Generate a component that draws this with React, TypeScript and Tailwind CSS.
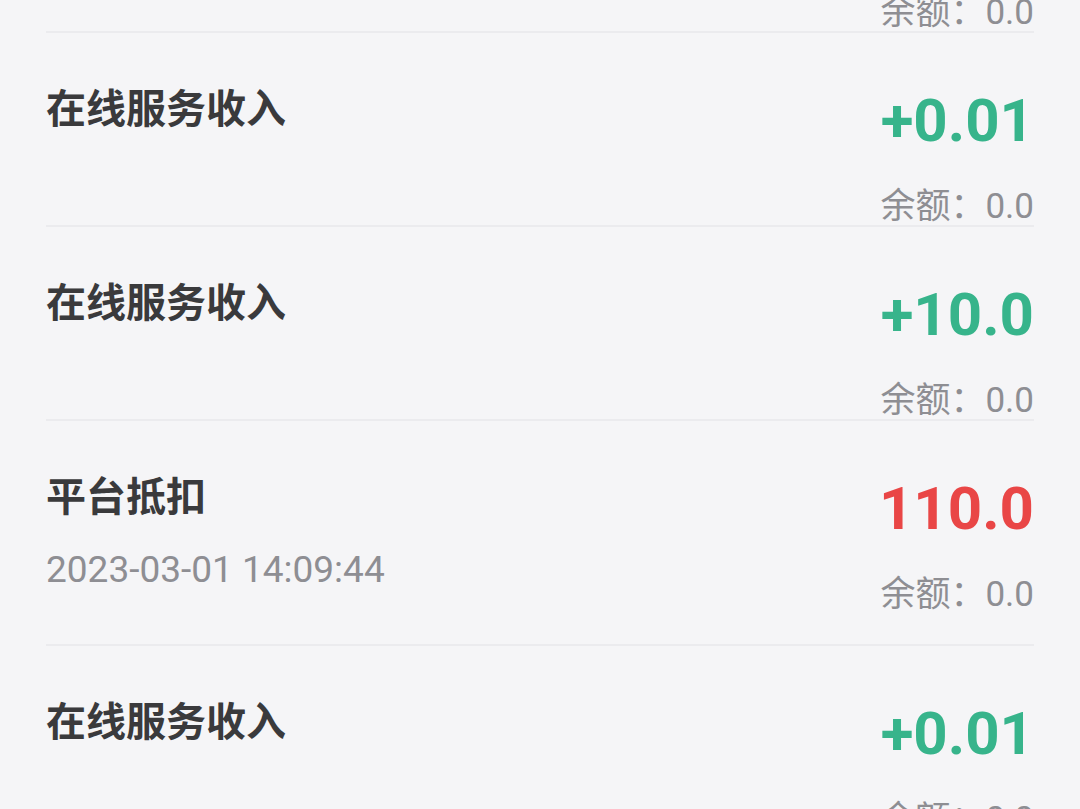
import React from "react";

type Row = { title: string; amount: string; kind: "in" | "out"; date?: string; balance: string };

const rows: Row[] = [
  { title: "在线服务收入", amount: "+0.01", kind: "in", balance: "0.0" },
  { title: "在线服务收入", amount: "+0.01", kind: "in", balance: "0.0" },
  { title: "在线服务收入", amount: "+10.0", kind: "in", balance: "0.0" },
  { title: "平台抵扣", amount: "110.0", kind: "out", date: "2023-03-01 14:09:44", balance: "0.0" },
  { title: "在线服务收入", amount: "+0.01", kind: "in", balance: "0.0" },
];

const font = { fontFamily: 'Roboto, "Noto Sans CJK SC", sans-serif' };

export default function App() {
  return (
    <div className="w-[1080px] h-[809px] overflow-hidden bg-[#f5f5f7]" style={font}>
      <div className="mx-[46px] -mt-[161px]">
        {rows.map((r, i) => (
          <div key={i} className="flex justify-between items-start border-b-2 border-[#ebebee] pt-[49px]">
            <div className={r.date ? "flex flex-col pb-[54px]" : "flex flex-col"}>
              <div className="text-[40px] leading-[56px] font-bold text-[#3a3a3c]">{r.title}</div>
              {r.date && (
                <div className="mt-[24px] text-[37px] leading-[40px] text-[#8e8e93]">{r.date}</div>
              )}
            </div>
            <div className="flex flex-col items-end">
              <div
                className={
                  r.kind === "in"
                    ? "text-[60px] leading-[78px] font-bold text-[#37b48b]"
                    : "text-[60px] leading-[78px] font-bold text-[#e94646]"
                }
              >
                {r.amount}
              </div>
              <div className="mt-[28px] text-[35px] leading-[37px] text-[#8e8e93]">
                余额：{r.balance}
              </div>
            </div>
          </div>
        ))}
      </div>
    </div>
  );
}
